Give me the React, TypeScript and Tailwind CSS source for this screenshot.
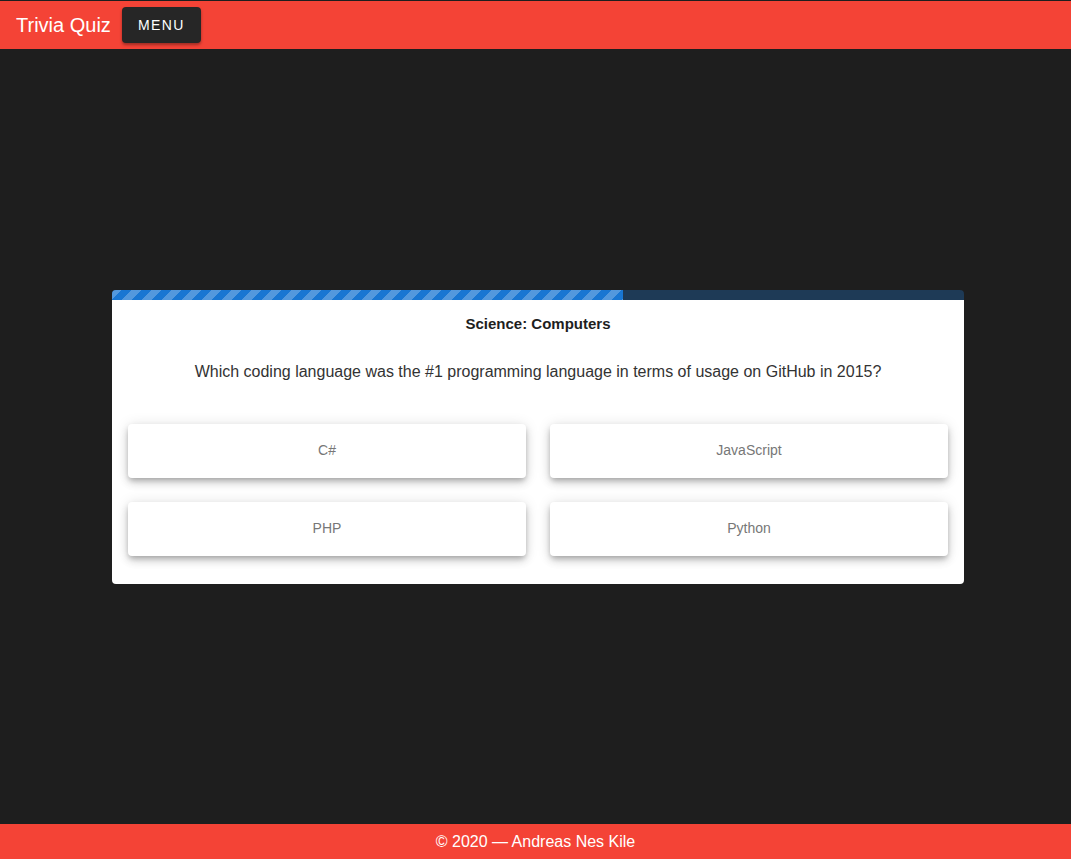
export default function App() {
  const answers = ["C#", "JavaScript", "PHP", "Python"];
  return (
    <div className="min-h-screen h-[859px] flex flex-col bg-[#1e1e1e] [font-family:'Liberation_Sans',Arial,sans-serif]">
      <header className="border-t border-[#1e1e1e] bg-[#f44336] h-[49px] flex items-center px-4 shrink-0">
        <span className="text-white text-[20px] leading-none mr-[11px]">Trivia Quiz</span>
        <button className="h-[36px] w-[79px] rounded bg-[#262626] text-white text-[14px] font-medium tracking-[0.1em] shadow-[0_2px_3px_rgba(0,0,0,0.35)]">
          MENU
        </button>
      </header>
      <main className="flex-1 flex flex-col justify-center px-[112px]">
        <div className="w-[852px]">
          <div className="h-[10px] rounded-t bg-[#1e3a56] overflow-hidden">
            <div className="h-full w-[511px] bg-[#1976d2] bg-[linear-gradient(135deg,rgba(255,255,255,0.25)_25%,transparent_25%,transparent_50%,rgba(255,255,255,0.25)_50%,rgba(255,255,255,0.25)_75%,transparent_75%,transparent)] bg-[length:20px_20px]" />
          </div>
          <div className="bg-white rounded-b px-4 pt-[14px] pb-[28px]">
            <h2 className="text-center text-[15px] font-bold text-[#1e1e1e] leading-[20px]">Science: Computers</h2>
            <p className="text-center text-[16px] text-[#333] leading-[20px] mt-[28px]">
              Which coding language was the #1 programming language in terms of usage on GitHub in 2015?
            </p>
            <div className="grid grid-cols-2 gap-6 mt-[42px]">
              {answers.map((a) => (
                <button
                  key={a}
                  className="h-[54px] rounded bg-white text-[14px] text-[#777] shadow-[0_3px_5px_-1px_rgba(0,0,0,0.2),0_5px_8px_0_rgba(0,0,0,0.14),0_1px_14px_0_rgba(0,0,0,0.12)]"
                >
                  {a}
                </button>
              ))}
            </div>
          </div>
        </div>
      </main>
      <footer className="bg-[#f44336] h-[35px] flex items-center justify-center text-white text-[16px] shrink-0">
        © 2020 — Andreas Nes Kile
      </footer>
    </div>
  );
}
